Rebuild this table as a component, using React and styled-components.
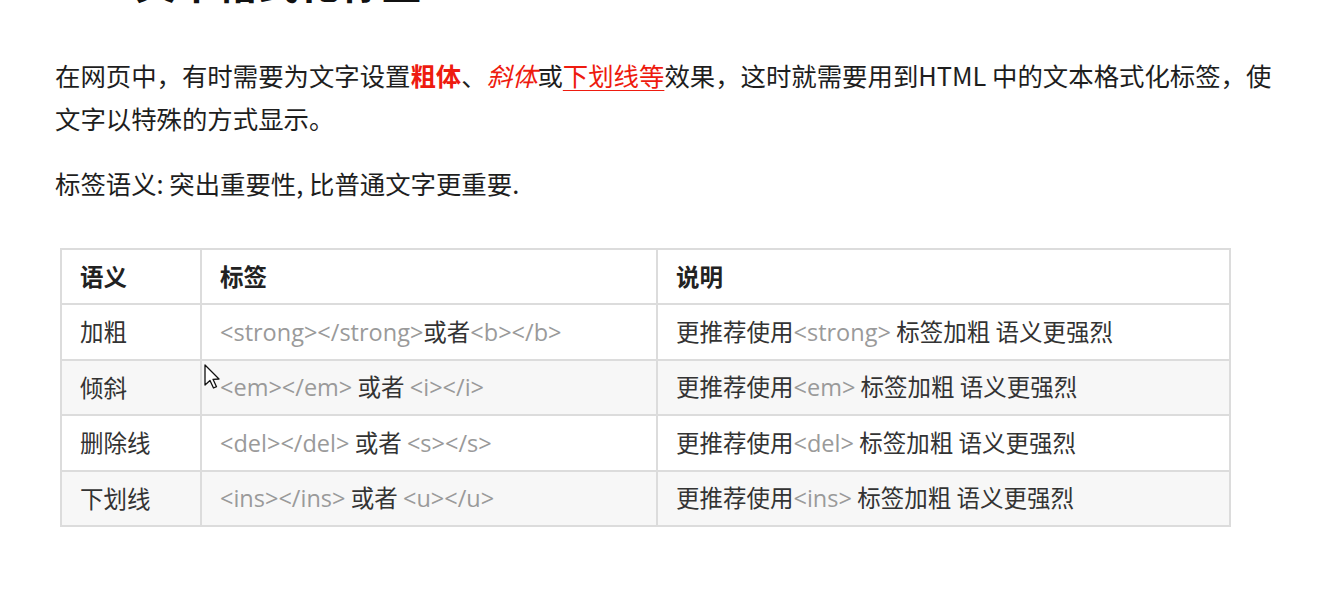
import React from "react";
import styled, { createGlobalStyle } from "styled-components";

const Global = createGlobalStyle`
  html, body { margin: 0; padding: 0; background: #fff; }
  body { font-family: "Noto Sans CJK SC", "Noto Sans", sans-serif; color: #222; overflow: hidden; }
`;

const Page = styled.div`
  position: relative;
  width: 1334px;
  height: 616px;
  overflow: hidden;
  padding-left: 55px;
  box-sizing: border-box;
`;

const Title = styled.h1`
  margin: -39px 0 0 80px;
  font-size: 41px;
  line-height: 41px;
  font-weight: 700;
  color: #111;
`;

const Para = styled.p`
  margin: ${(p) => p.$mt || 0}px 0 0 0;
  font-size: 25.4px;
  line-height: 43px;
  font-weight: 400;
  color: #1e1e1e;
  width: 1275px;
  white-space: nowrap;
`;

const Bold = styled.strong`
  color: #ee1b0f;
  font-weight: 700;
`;
const Ital = styled.em`
  color: #ee1b0f;
  font-style: italic;
`;
const Under = styled.span`
  color: #ee1b0f;
  text-decoration: underline;
  text-underline-offset: 4px;
  text-decoration-thickness: 1px;
`;

const Table = styled.table`
  margin: 43px 0 0 5px;
  border-collapse: collapse;
  width: 1171px;
  font-size: 23.5px;
  color: #333;
  border: 2px solid #dcdcdc;
`;

const Row = styled.tr`
  background: ${(p) => (p.$alt ? "#f7f7f7" : "#fff")};
`;

const Cell = styled.td`
  border: 2px solid #dcdcdc;
  height: 55.4px;
  padding: 0 0 0 18px;
  box-sizing: border-box;
  width: ${(p) => p.$w || "auto"};
  white-space: nowrap;
  font-weight: ${(p) => (p.$head ? 700 : 400)};
  color: ${(p) => (p.$head ? "#222" : "#333")};
  line-height: 1;
`;

const Tag = styled.span`
  color: #9a9a9a;
  font-family: "Open Sans", "Noto Sans", sans-serif;
  font-size: 23.5px;
`;

const Cursor = styled.svg`
  position: absolute;
  left: 204px;
  top: 364px;
`;

const rows = [
  { s: "加粗", t: ["<strong></strong>", "或者", "<b></b>"], d: "<strong>" },
  { s: "倾斜", t: ["<em></em>", " 或者 ", "<i></i>"], d: "<em>" },
  { s: "删除线", t: ["<del></del>", " 或者 ", "<s></s>"], d: "<del>" },
  { s: "下划线", t: ["<ins></ins>", " 或者 ", "<u></u>"], d: "<ins>" },
];

export default function App() {
  return (
    <Page>
      <Global />
      <Title>文本格式化标签</Title>
      <Para $mt={52}>
        在网页中，有时需要为文字设置<Bold>粗体</Bold>、<Ital>斜体</Ital>或<Under>下划线等</Under>效果，这时就需要用到HTML 中的文本格式化标签，使
        <br />
        文字以特殊的方式显示。
      </Para>
      <Para $mt={22}>标签语义: 突出重要性, 比普通文字更重要.</Para>
      <Table>
        <tbody>
          <Row>
            <Cell $head $w="140px">语义</Cell>
            <Cell $head $w="456px">标签</Cell>
            <Cell $head>说明</Cell>
          </Row>
          {rows.map((r, i) => (
            <Row key={r.s} $alt={i % 2 === 1}>
              <Cell>{r.s}</Cell>
              <Cell>
                <Tag>{r.t[0]}</Tag>
                {r.t[1]}
                <Tag>{r.t[2]}</Tag>
              </Cell>
              <Cell>
                更推荐使用<Tag>{r.d}</Tag> 标签加粗 语义更强烈
              </Cell>
            </Row>
          ))}
        </tbody>
      </Table>
      <Cursor width="16" height="26" viewBox="0 0 16 26">
        <path d="M1 1 L1 21 L6 16.5 L9.5 24 L12.5 22.7 L9 15.3 L15 15 Z" fill="#fff" stroke="#111" strokeWidth="1.3" strokeLinejoin="round" />
      </Cursor>
    </Page>
  );
}
